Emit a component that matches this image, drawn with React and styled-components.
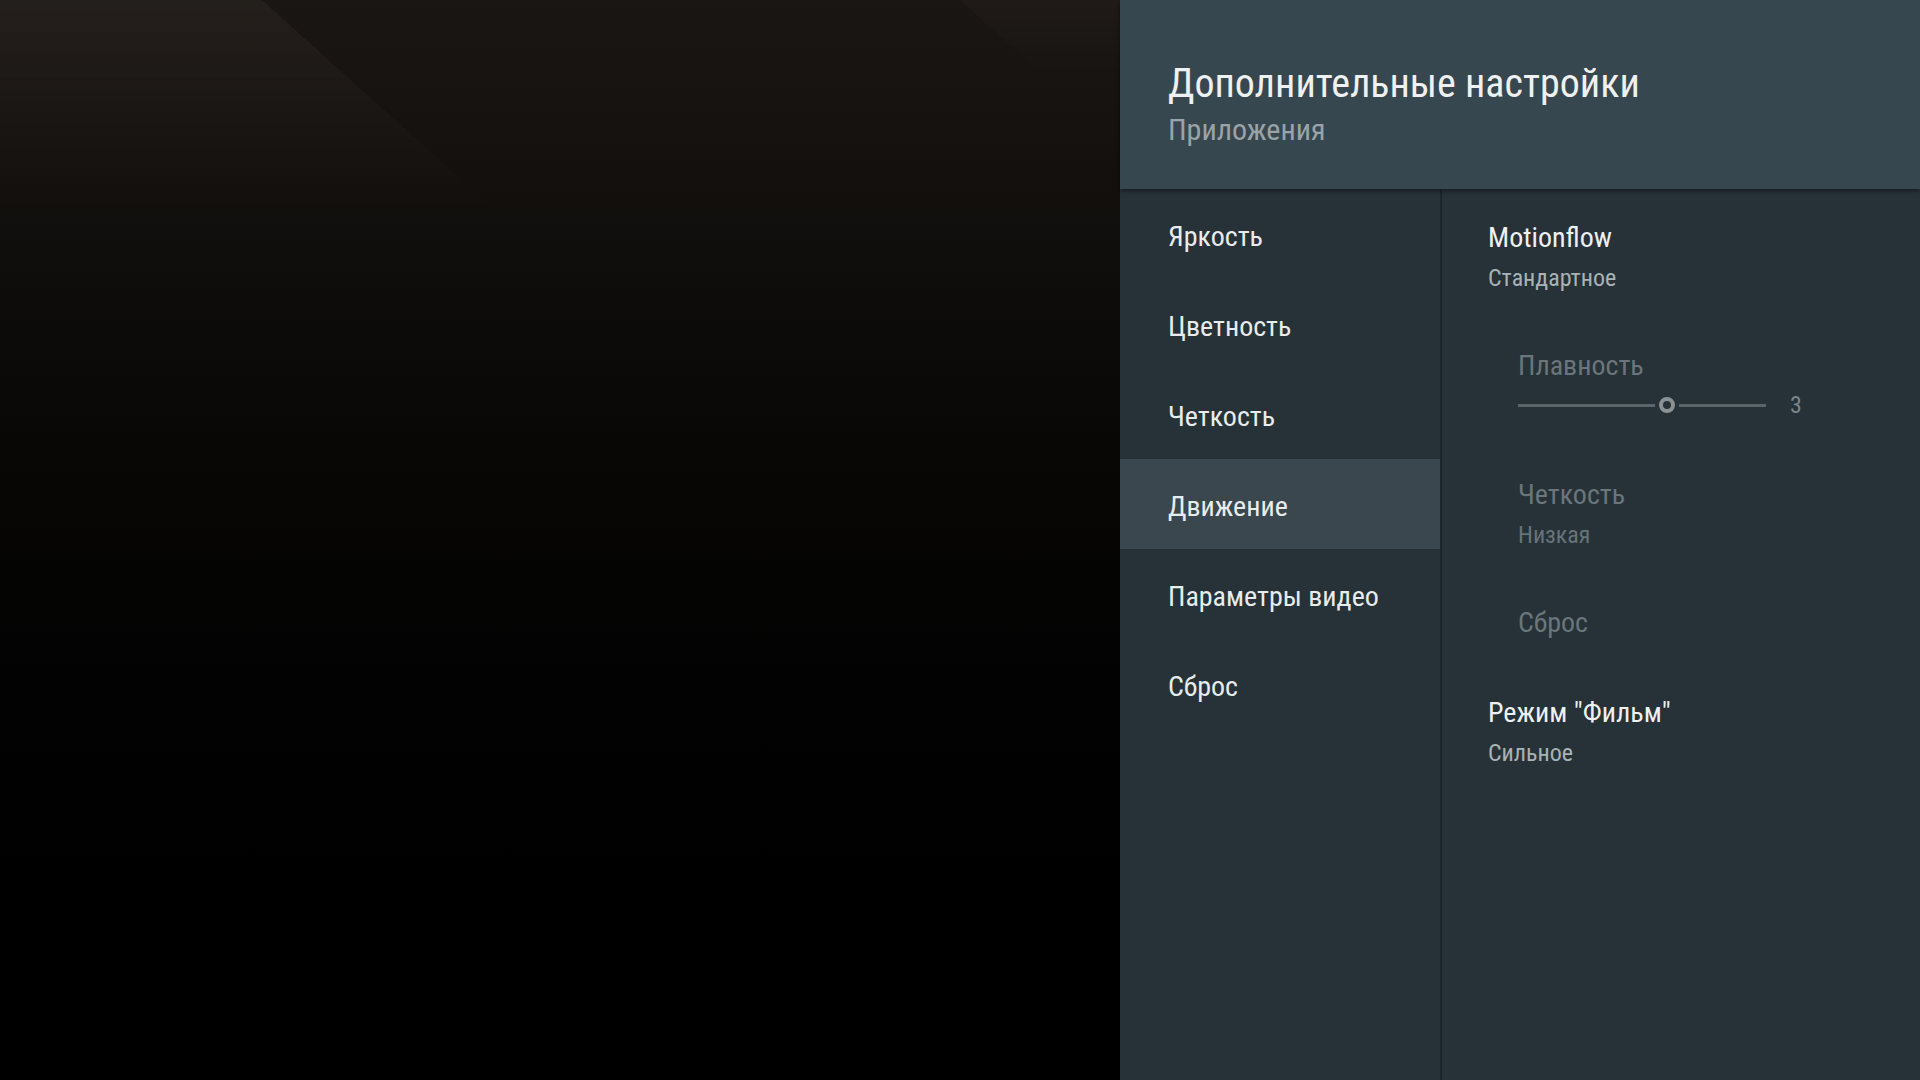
import React from "react";
import styled, { createGlobalStyle } from "styled-components";

const Global = createGlobalStyle`
  html, body { margin: 0; padding: 0; background: #000; overflow: hidden; }
  * { box-sizing: border-box; }
`;

const FONT = `"Roboto Condensed", "Roboto", "Noto Sans", sans-serif`;

const Screen = styled.div`
  display: flex;
  width: 1920px;
  height: 1080px;
  font-family: ${FONT};
  font-stretch: condensed;
`;

const Backdrop = styled.div`
  position: relative;
  flex: 1;
  overflow: hidden;
  background: linear-gradient(
    180deg,
    #1a1613 0%,
    #15120f 12%,
    #0e0c0b 28%,
    #070605 45%,
    #020202 65%,
    #000 80%
  );

  &::before,
  &::after {
    content: "";
    position: absolute;
    inset: 0;
  }

  &::before {
    background: linear-gradient(222deg, rgba(0, 0, 0, 0) 0 37%, rgba(255, 240, 222, 0.045) 37%);
    -webkit-mask-image: linear-gradient(180deg, #000 0, rgba(0, 0, 0, 0.5) 110px, transparent 240px);
    mask-image: linear-gradient(180deg, #000 0, rgba(0, 0, 0, 0.5) 110px, transparent 240px);
  }

  &::after {
    background: linear-gradient(222deg, rgba(255, 240, 222, 0.025) 0 6.9%, rgba(0, 0, 0, 0) 6.9%);
    -webkit-mask-image: linear-gradient(180deg, #000 0, transparent 90px);
    mask-image: linear-gradient(180deg, #000 0, transparent 90px);
  }
`;

const Panel = styled.div`
  width: 800px;
  display: flex;
  flex-direction: column;
  background: #263238;
`;

const Header = styled.header`
  position: relative;
  z-index: 2;
  height: 189px;
  padding: 60px 0 0 48px;
  background: #37474f;
  box-shadow: 0 2px 5px rgba(0, 0, 0, 0.45);
`;

const Title = styled.h1`
  margin: 0;
  font-size: 40px;
  line-height: 48px;
  font-weight: 400;
  color: #eef0f1;
`;

const Subtitle = styled.div`
  margin-top: 4px;
  font-size: 30px;
  line-height: 36px;
  color: #9aa3a7;
`;

const Body = styled.div`
  flex: 1;
  display: flex;
`;

const Menu = styled.nav`
  width: 322px;
  display: flex;
  flex-direction: column;
  border-right: 2px solid #1d252a;
`;

const MenuItem = styled.div`
  height: 90px;
  padding: 5px 0 0 48px;
  display: flex;
  align-items: center;
  font-size: 28px;
  color: #e9ecec;
  background: ${(p) => (p.$active ? "#3a474e" : "transparent")};
`;

const Detail = styled.section`
  flex: 1;
  display: flex;
  flex-direction: column;
  gap: 58px;
  padding: 33px 0 0 46px;
`;

const Option = styled.div`
  display: flex;
  flex-direction: column;
  padding-left: ${(p) => (p.$nested ? "30px" : "0")};
  margin-bottom: ${(p) => (p.$extra ? "4px" : "0")};
`;

const OptionTitle = styled.div`
  font-size: 28px;
  line-height: 32px;
  color: ${(p) => (p.$dim ? "#6b767b" : "#eef0f1")};
`;

const OptionValue = styled.div`
  margin-top: 10px;
  font-size: 24px;
  line-height: 28px;
  color: ${(p) => (p.$dim ? "#687378" : "#aab2b5")};
`;

const SliderRow = styled.div`
  margin-top: 11px;
  height: 24px;
  display: flex;
  align-items: center;
  gap: 24px;
`;

const Track = styled.div`
  position: relative;
  width: 248px;
  height: 3px;
  background: #5a6569;
`;

const Knob = styled.div`
  position: absolute;
  top: 50%;
  width: 16px;
  height: 16px;
  margin: -8px 0 0 -8px;
  border-radius: 50%;
  border: 4px solid #8b9194;
  background: #263238;
  box-shadow: 0 0 0 4px #263238;
`;

const SliderValue = styled.div`
  font-size: 24px;
  line-height: 24px;
  color: #7b8488;
`;

const menu = ["Яркость", "Цветность", "Четкость", "Движение", "Параметры видео", "Сброс"];

function Slider({ value, max }) {
  return (
    <SliderRow>
      <Track>
        <Knob style={{ left: `${(value / max) * 100}%` }} />
      </Track>
      <SliderValue>{value}</SliderValue>
    </SliderRow>
  );
}

export default function App() {
  return (
    <Screen>
      <Global />
      <Backdrop />
      <Panel>
        <Header>
          <Title>Дополнительные настройки</Title>
          <Subtitle>Приложения</Subtitle>
        </Header>
        <Body>
          <Menu>
            {menu.map((m) => (
              <MenuItem key={m} $active={m === "Движение"}>
                {m}
              </MenuItem>
            ))}
          </Menu>
          <Detail>
            <Option>
              <OptionTitle>Motionflow</OptionTitle>
              <OptionValue>Стандартное</OptionValue>
            </Option>
            <Option $nested $extra>
              <OptionTitle $dim>Плавность</OptionTitle>
              <Slider value={3} max={5} />
            </Option>
            <Option $nested>
              <OptionTitle $dim>Четкость</OptionTitle>
              <OptionValue $dim>Низкая</OptionValue>
            </Option>
            <Option $nested>
              <OptionTitle $dim>Сброс</OptionTitle>
            </Option>
            <Option>
              <OptionTitle>Режим "Фильм"</OptionTitle>
              <OptionValue>Сильное</OptionValue>
            </Option>
          </Detail>
        </Body>
      </Panel>
    </Screen>
  );
}
